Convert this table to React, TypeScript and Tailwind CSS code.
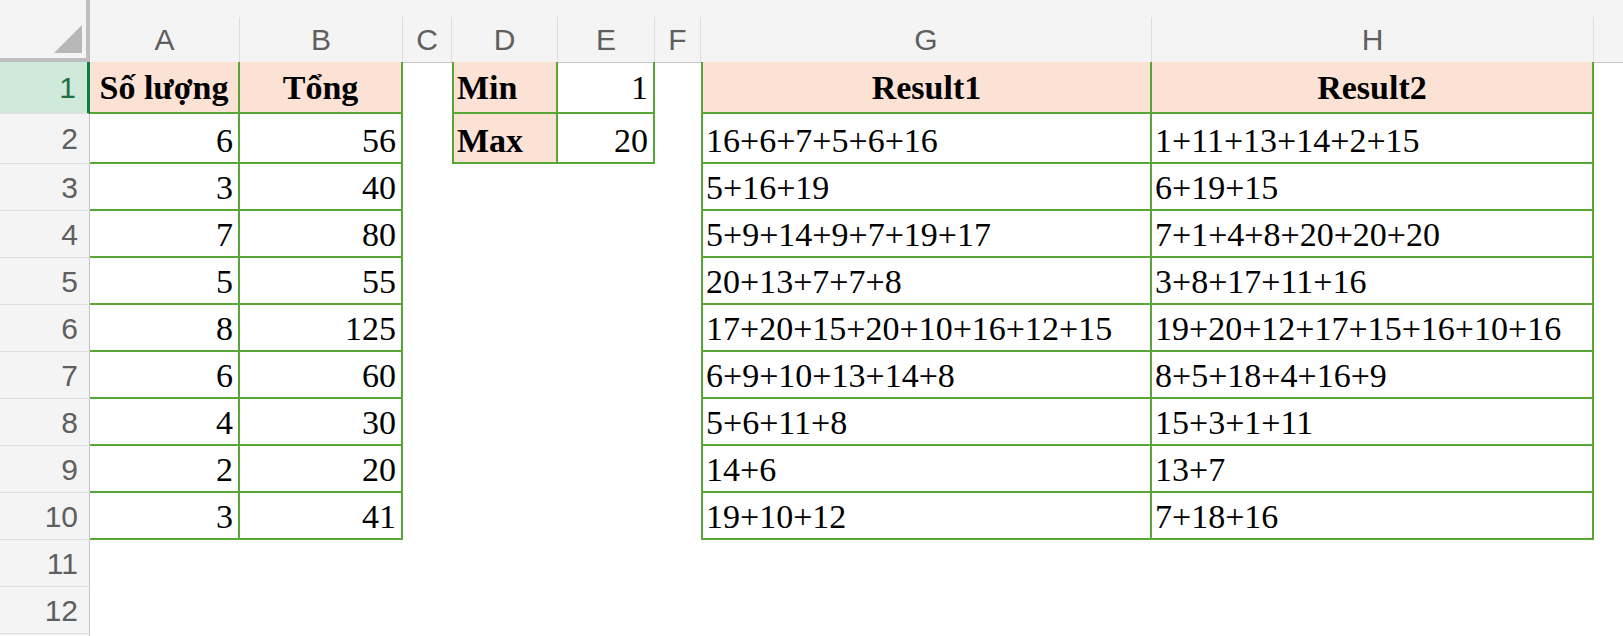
import clsx from "clsx";

const COLS = "grid grid-cols-[90px_150px_163px_49px_106px_97px_46px_451px_442px_1fr]";
const GREEN = "border-[#58a636]";

const letters = ["A", "B", "C", "D", "E", "F", "G", "H", ""];

const qty = [6, 3, 7, 5, 8, 6, 4, 2, 3];
const total = [56, 40, 80, 55, 125, 60, 30, 20, 41];
const result1 = [
  "16+6+7+5+6+16",
  "5+16+19",
  "5+9+14+9+7+19+17",
  "20+13+7+7+8",
  "17+20+15+20+10+16+12+15",
  "6+9+10+13+14+8",
  "5+6+11+8",
  "14+6",
  "19+10+12",
];
const result2 = [
  "1+11+13+14+2+15",
  "6+19+15",
  "7+1+4+8+20+20+20",
  "3+8+17+11+16",
  "19+20+12+17+15+16+10+16",
  "8+5+18+4+16+9",
  "15+3+1+11",
  "13+7",
  "7+18+16",
];

interface CellProps {
  children?: React.ReactNode;
  peach?: boolean;
  left?: boolean;
  edge?: boolean;
  align?: "left" | "center" | "right";
  bold?: boolean;
  head?: boolean;
}

function Cell({ children, peach, left, edge, align = "left", bold, head }: CellProps) {
  return (
    <div
      className={clsx(
        "flex items-end overflow-hidden whitespace-nowrap text-[34px] leading-[34px] text-black font-['Liberation_Serif','Times_New_Roman',serif]",
        peach && "bg-[#fbe2d5]",
        edge && "border-r-2 border-b-2",
        edge && GREEN,
        left && "border-l-2",
        bold && "font-bold",
        head ? "pb-[7px]" : "pb-[4px]",
        align === "left" && "justify-start pl-[3px]",
        align === "center" && "justify-center",
        align === "right" && "justify-end pr-[5px]"
      )}
    >
      {children}
    </div>
  );
}

function RowNum({ n, active }: { n?: number; active?: boolean }) {
  return (
    <div
      className={clsx(
        "flex items-center justify-end pr-[11px] border-b border-[#e0e0e0] text-[30px] font-['Liberation_Sans',Arial,sans-serif]",
        active
          ? "bg-[#cfeadb] text-[#1e7145] border-r-[3px] border-r-[#107c41]"
          : "bg-[#f4f4f4] text-[#5f5f5f] border-r border-r-[#c4c4c4]"
      )}
    >
      {n}
    </div>
  );
}

export default function App() {
  return (
    <div className="w-[1623px] h-[636px] overflow-hidden bg-white">
      {/* column headers */}
      <div className={clsx(COLS, "h-[62px] bg-[#f4f4f4]")}>
        <div className="flex items-end justify-end pr-[4px] pb-[5px] border-r-4 border-b-[5px] border-[#bebebe]">
          <svg width="28" height="28" viewBox="0 0 28 28">
            <polygon points="28,0 28,28 0,28" fill="#b8b8b8" />
          </svg>
        </div>
        {letters.map((l, i) => (
          <div key={i} className="flex flex-col border-b border-[#c8c8c8]">
            <div className="h-[17px]" />
            <div
              className={clsx(
                "flex flex-1 items-center justify-center text-[30px] text-[#5f5f5f] font-['Liberation_Sans',Arial,sans-serif]",
                l && "border-r border-[#dedede]"
              )}
            >
              {l}
            </div>
          </div>
        ))}
      </div>

      {/* row 1 */}
      <div className={clsx(COLS, "h-[52px]")}>
        <RowNum n={1} active />
        <Cell peach edge bold head align="center">Số lượng</Cell>
        <Cell peach edge bold head align="center">Tổng</Cell>
        <div />
        <Cell peach edge left bold head>Min</Cell>
        <Cell edge head align="right">1</Cell>
        <div />
        <Cell peach edge left bold head align="center">Result1</Cell>
        <Cell peach edge bold head align="center">Result2</Cell>
        <div />
      </div>

      {/* rows 2-10 */}
      {qty.map((q, i) => (
        <div key={i} className={clsx(COLS, i === 0 ? "h-[50px]" : "h-[47px]")}>
          <RowNum n={i + 2} />
          <Cell edge align="right">{q}</Cell>
          <Cell edge align="right">{total[i]}</Cell>
          <div />
          {i === 0 ? (
            <>
              <Cell peach edge left bold>Max</Cell>
              <Cell edge align="right">20</Cell>
            </>
          ) : (
            <>
              <div />
              <div />
            </>
          )}
          <div />
          <Cell edge left>{result1[i]}</Cell>
          <Cell edge>{result2[i]}</Cell>
          <div />
        </div>
      ))}

      {/* rows 11-12, and the top of 13 */}
      {[11, 12].map((n) => (
        <div key={n} className={clsx(COLS, "h-[47px]")}>
          <RowNum n={n} />
        </div>
      ))}
      <div className={clsx(COLS, "h-[47px]")}>
        <RowNum />
      </div>
    </div>
  );
}
